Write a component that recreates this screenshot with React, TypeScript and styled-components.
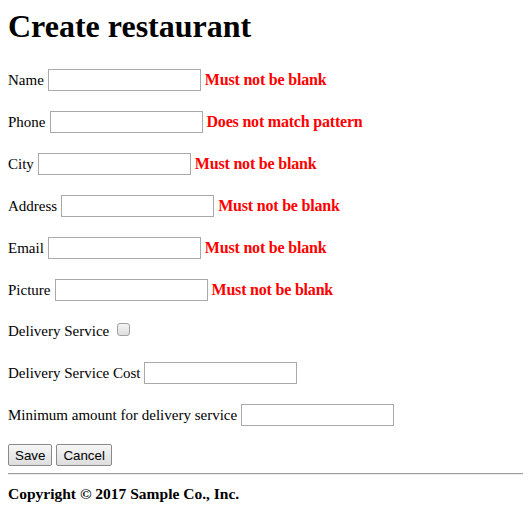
import styled, { createGlobalStyle } from 'styled-components'

const GlobalStyle = createGlobalStyle`
  body {
    margin: 8px;
    font-family: "Liberation Serif", "Times New Roman", serif;
    font-size: 16px;
    color: #000;
    background: #fff;
  }
`

const Title = styled.h1`
  margin: 0 0 22px;
  font-size: 32px;
  font-weight: bold;
  line-height: 37px;
`

const Form = styled.form`
  margin: 0;
`

const Row = styled.div<{ $short?: boolean }>`
  display: flex;
  align-items: center;
  height: ${(p) => (p.$short ? '25px' : '26px')};
  margin-bottom: 16px;
`

const Label = styled.label`
  margin-right: 4px;
  font-size: 15px;
  white-space: nowrap;
`

const TextInput = styled.input`
  box-sizing: border-box;
  width: 153px;
  height: 22px;
  margin: 0;
  border: 1px solid #a9a9a9;
  padding: 1px 2px;
  background: #fff;
`

const Error = styled.span`
  margin-left: 4px;
  color: #ff0000;
  font-weight: bold;
  letter-spacing: -0.2px;
  white-space: nowrap;
`

const CheckBox = styled.span`
  box-sizing: border-box;
  width: 13px;
  height: 13px;
  margin-left: 4px;
  margin-top: -5px;
  border: 1px solid #a0a0a0;
  border-radius: 3px;
  background: linear-gradient(#f4f4f4, #dedede);
`

const Buttons = styled.div`
  display: flex;
  gap: 4px;
  margin-top: 3px;
`

const Button = styled.button`
  height: 22px;
  padding: 0 6px;
  font-family: "Liberation Sans", Arial, sans-serif;
  font-size: 13.33px;
  color: #000;
  border: 1px solid #8a8a8a;
  border-radius: 2px;
  background: linear-gradient(#f6f6f6, #dddddd);
`

const Rule = styled.hr`
  box-sizing: border-box;
  width: calc(100% + 8px);
  margin: 7px 0 0;
  border: 0;
  border-top: 1px solid #9a9a9a;
  border-bottom: 1px solid #eee;
`

const Footer = styled.footer`
  margin-top: 10px;
  font-weight: bold;
  font-size: 15.5px;
`

const fields = [
  { label: 'Name', error: 'Must not be blank' },
  { label: 'Phone', error: 'Does not match pattern' },
  { label: 'City', error: 'Must not be blank' },
  { label: 'Address', error: 'Must not be blank' },
  { label: 'Email', error: 'Must not be blank' },
  { label: 'Picture', error: 'Must not be blank' },
]

const App = () => {
  return (
    <>
      <GlobalStyle />
      <Title>Create restaurant</Title>
      <Form>
        {fields.map((f) => (
          <Row key={f.label}>
            <Label>{f.label}</Label>
            <TextInput type="text" />
            <Error>{f.error}</Error>
          </Row>
        ))}
        <Row $short>
          <Label>Delivery Service</Label>
          <CheckBox />
        </Row>
        <Row>
          <Label>Delivery Service Cost</Label>
          <TextInput type="text" />
        </Row>
        <Row>
          <Label>Minimum amount for delivery service</Label>
          <TextInput type="text" />
        </Row>
        <Buttons>
          <Button type="button">Save</Button>
          <Button type="button">Cancel</Button>
        </Buttons>
      </Form>
      <Rule />
      <Footer>Copyright © 2017 Sample Co., Inc.</Footer>
    </>
  )
}

export default App
